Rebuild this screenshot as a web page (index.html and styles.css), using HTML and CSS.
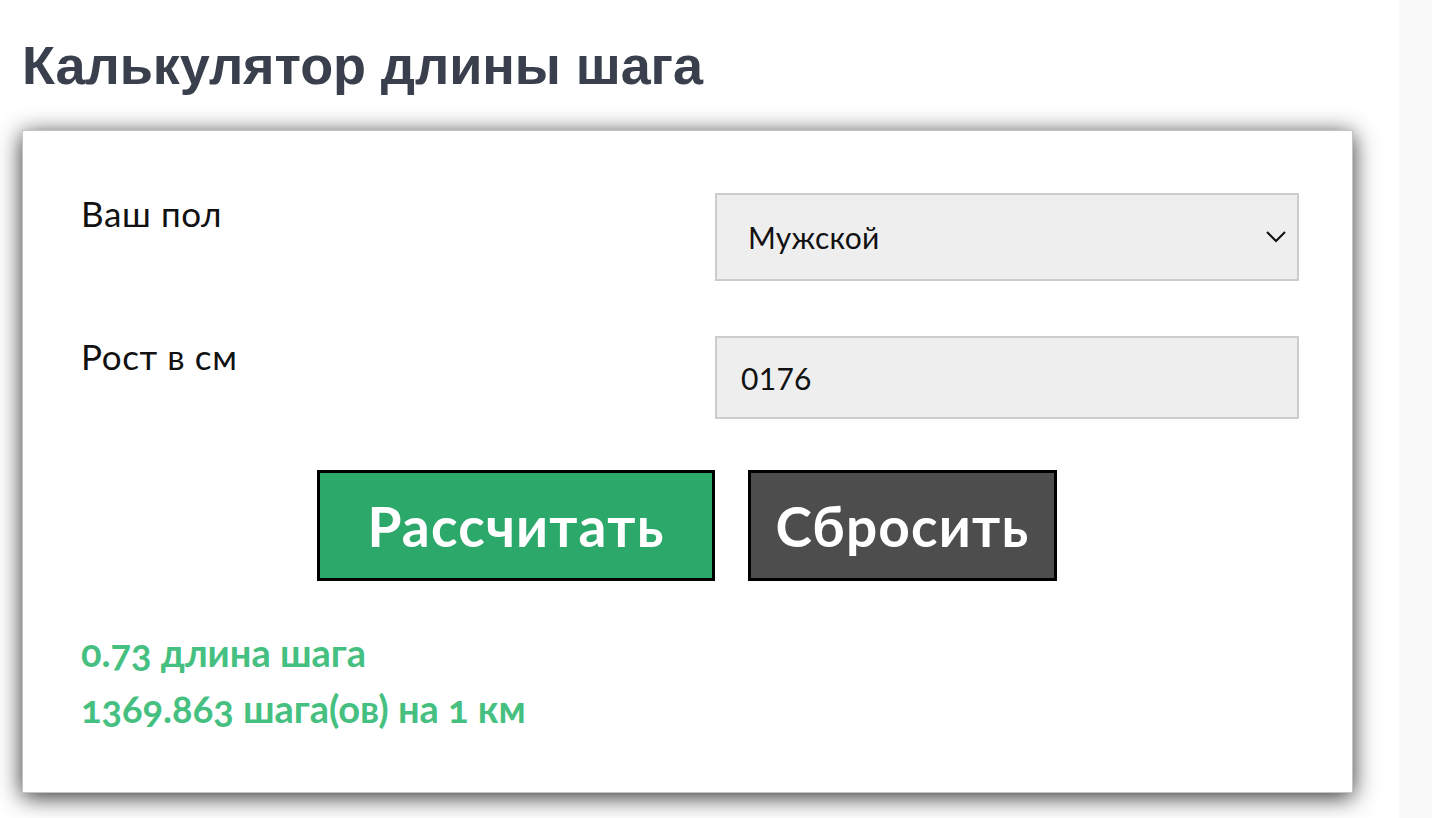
FILE: index.html
```html
<!DOCTYPE html>
<html lang="ru">
<head>
<meta charset="utf-8">
<title>Калькулятор длины шага</title>
<link rel="stylesheet" href="styles.css">
</head>
<body>
<div class="page">
  <main class="main">
    <h1 class="title">Калькулятор длины шага</h1>
    <section class="card">
      <div class="form-grid">
        <label class="label" for="gender">Ваш пол</label>
        <div class="select-wrap">
          <select id="gender" class="field select">
            <option>Мужской</option>
            <option>Женский</option>
          </select>
          <svg class="chevron" width="22" height="14" viewBox="0 0 22 14" aria-hidden="true">
            <path d="M2 2 L11 11 L20 2" fill="none" stroke="#111" stroke-width="2"/>
          </svg>
        </div>
        <label class="label" for="height">Рост в см</label>
        <input id="height" class="field input" type="text" value="0176">
      </div>
      <div class="buttons">
        <button class="btn btn-calc" type="button">Рассчитать</button>
        <button class="btn btn-reset" type="button">Сбросить</button>
      </div>
      <div class="results">
        <p class="result">0.73 длина шага</p>
        <p class="result">1369.863 шага(ов) на 1 км</p>
      </div>
    </section>
  </main>
  <aside class="side"></aside>
</div>
</body>
</html>
```
FILE: styles.css
```css
html, body {
  margin: 0;
  padding: 0;
  background: #ffffff;
}

body {
  font-family: Lato, "Open Sans", "Noto Sans", sans-serif;
  color: #111;
}

.page {
  display: flex;
  min-height: 818px;
  overflow: hidden;
}

.main {
  width: 1399px;
  flex: none;
  padding: 0 0 0 22px;
  box-sizing: border-box;
  background: #fff;
}

.side {
  flex: 1;
  background: #f9f9f9;
}

.title {
  margin: 34px 0 34px;
  font-family: "Liberation Sans", Arial, sans-serif;
  font-weight: 700;
  font-size: 54px;
  line-height: 62px;
  color: #393f4c;
  letter-spacing: -0.1px;
}

.card {
  width: 1331px;
  box-sizing: border-box;
  background: #fff;
  border: 1px solid #c4c4c4;
  box-shadow: 0 4px 22px rgba(0, 0, 0, 0.82);
  padding: 62px 53px 56px 58px;
}

.form-grid {
  display: grid;
  grid-template-columns: 1fr 584px;
  row-gap: 55px;
  align-items: start;
}

.label {
  font-size: 35px;
  line-height: 48px;
  font-weight: 400;
  letter-spacing: 0.6px;
  color: #111;
  margin-top: -4px;
}

.select-wrap {
  position: relative;
}

.field {
  display: block;
  width: 100%;
  box-sizing: border-box;
  background: #eeeeee;
  border: 2px solid #cccccc;
  border-radius: 0;
  font-family: Lato, "Open Sans", sans-serif;
  font-size: 30px;
  letter-spacing: 0.3px;
  color: #111;
  outline: none;
  margin: 0;
}

.select {
  height: 88px;
  padding: 0 60px 0 31px;
  appearance: none;
  -webkit-appearance: none;
}

.chevron {
  position: absolute;
  right: 12px;
  top: 37px;
  pointer-events: none;
}

.input {
  height: 83px;
  padding: 0 24px;
}

.buttons {
  display: flex;
  justify-content: center;
  gap: 33px;
  margin: 51px 0 0 -6px;
}

.btn {
  height: 111px;
  box-sizing: border-box;
  border: 3px solid #000;
  border-radius: 0;
  color: #fff;
  font-family: Lato, "Open Sans", sans-serif;
  font-weight: 700;
  font-size: 55px;
  letter-spacing: 1.2px;
  padding: 0;
  cursor: pointer;
}

.btn-calc {
  width: 398px;
  background: #2ca86a;
}

.btn-reset {
  width: 309px;
  background: #4d4d4d;
}

.results {
  margin-top: 43px;
}

.result {
  margin: 0;
  font-size: 38px;
  line-height: 56px;
  font-weight: 700;
  color: #46c080;
  font-variant-numeric: oldstyle-nums;
}
```
